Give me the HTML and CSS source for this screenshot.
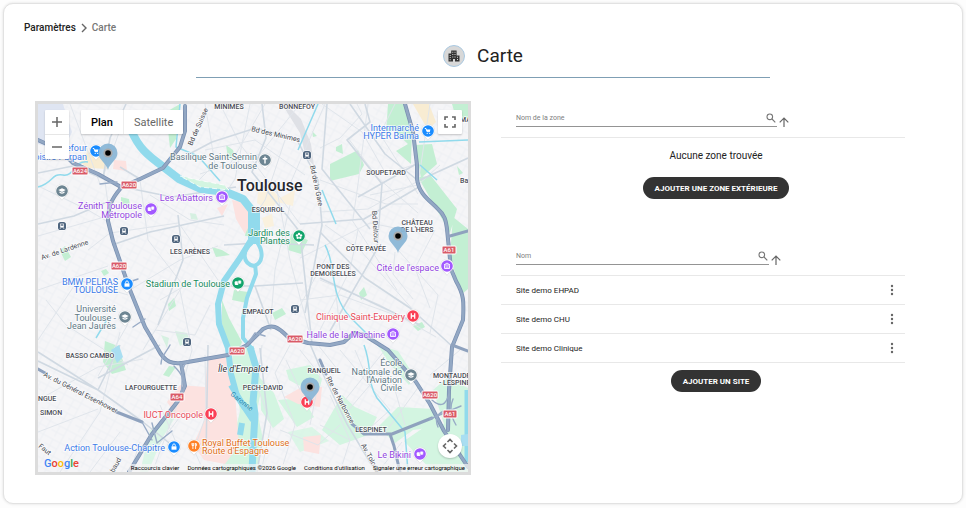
FILE: index.html
```html
<!DOCTYPE html>
<html lang="fr">
<head>
<meta charset="utf-8">
<meta name="viewport" content="width=device-width, initial-scale=1">
<title>Carte</title>
<link rel="stylesheet" href="styles.css">
</head>
<body>
<main class="card">
  <nav class="breadcrumb" aria-label="Fil d'Ariane">
    <a href="#">Paramètres</a>
    <svg width="6" height="10" viewBox="0 0 6 10" fill="none" stroke="#666" stroke-width="1.4"><path d="M1 1l4 4-4 4"/></svg>
    <span>Carte</span>
  </nav>

  <header class="title">
    <span class="title-icon">
      <svg width="12" height="12" viewBox="0 0 12 12"><path fill="#333" d="M3.2.5h5.4v5h2.9v6H7v-2.600H5v2.600H.5v-8h2.700z"/><path fill="#d8d8d8" d="M4.300 1.700h1v1h-1zM6.500 1.700h1v1h-1zM4.300 4h1v1h-1zM6.500 4h1v1h-1zM4.300 6.400h1v1h-1zM6.500 6.400h1v1h-1zM1.700 4.900h1v1h-1zM1.700 7h1v1h-1zM1.700 9.200h1v1h-1zM9 6.800h1v1H9zM9 9h1v1H9z"/></svg>
    </span>
    <h1>Carte</h1>
  </header>

  <div class="columns">
    <section class="map" aria-label="Carte de Toulouse">
      <svg class="map-canvas" viewBox="38 104 430 368" preserveAspectRatio="xMidYMid slice">
        <defs>
          <g id="pin"><path d="M-7 0a7 7 0 1 1 14 0C7 4 2.500 6 0 9.500C-2.500 6-7 4-7 0z" fill="#bbb" opacity=".5"/><path d="M-6.700 0a6.700 6.700 0 1 1 13.400 0C6.700 3.500 2.500 5.500 0 9C-2.500 5.500-6.700 3.500-6.700 0z" fill="#fff"/><circle r="5.800" fill="currentColor"/></g>
          <g id="cart" fill="none" stroke="#fff"><path d="M-3.200-2.500h1.200l1 3.200h3"/><path fill="#fff" d="M-1.500-1.500h4L1.800.400h-2.800z" stroke="none"/><path d="M-1.300 2.500h1M1.200 2.500h1"/></g>
          <g id="museum" fill="none" stroke="#fff" stroke-width=".9"><path d="M-3-1L0-3l3 2zM-2.500-.500v3h5v-3M-.900 2V.200M.900 2V.200"/></g>
          <g id="masks"><rect x="-3.300" y="-1.800" width="3.800" height="3.800" rx="1" fill="#fff"/><rect x="0" y="-2.800" width="3.300" height="3.800" rx="1" fill="#fff" stroke="currentColor" stroke-width=".5"/></g>
          <g id="school"><path fill="#fff" d="M-3.700-1L0-2.800 3.700-1 0 1z"/><path fill="none" stroke="#fff" stroke-width="1.200" d="M-2.400.700C-1.500 2.500 1.500 2.500 2.400.700"/></g>
          <g id="bag"><path fill="#fff" d="M-2.500-.700h5V2.700h-5z"/><path fill="none" stroke="#fff" stroke-width=".9" d="M-1.300-.600v-1.200a1.300 1.300 0 0 1 2.600 0v1.200"/></g>
          <path id="hospital" d="M-1.700-2.700v5.400M1.700-2.700v5.400M-1.700 0h3.400" stroke="#fff" stroke-width="1.300"/>
          <g id="flower" fill="#fff"><circle cy="-2.100" r="1.200"/><circle cx="2" cy="-.600" r="1.200"/><circle cx="1.300" cy="1.800" r="1.200"/><circle cx="-1.300" cy="1.800" r="1.200"/><circle cx="-2" cy="-.600" r="1.200"/></g>
          <g id="station"><rect x="-4.500" y="-4.500" width="9" height="9" rx="3" fill="#fff"/><rect x="-4" y="-4" width="8" height="8" rx="2.600" fill="#4f657e"/><path fill="#fff" d="M-1.800-2.400h3.600V1.500h-3.600z"/><path fill="#4f657e" d="M-1.200-1.700h2.400v1.400h-2.400z"/><path stroke="#fff" stroke-width=".7" d="M-1 1.500l-1 1.300M1 1.500l1 1.300"/></g>
          <g id="marker"><path fill="#8ab6d6" fill-opacity=".95" d="M0 17C-1.500 10-9.500 7-9.500 0a9.500 9.500 0 0 1 19 0C9.500 7 1.500 10 0 17z"/><circle r="4.600" fill="#a8a8a8"/><circle r="2.800" fill="#000"/></g>
          <pattern id="streets" width="19" height="15" patternUnits="userSpaceOnUse" patternTransform="rotate(28)"><path d="M0 3h19M6 3v12M14 0v15M0 10h14" fill="none" stroke="#ebeef2" stroke-width=".7"/></pattern>
        </defs>

        <rect x="38" y="104" width="430" height="368" fill="#f5f5f7"/>
        <rect x="38" y="104" width="430" height="368" fill="url(#streets)"/>
        <path fill="#dfe5f2" d="M38 104h25l9 28-9 19-25-7z"/>
        <path fill="#f8ecd2" d="M89 150l14 1 5 18-20-1-8-6zM413 104h16l7 18-8 8z"/>
        <path fill="#faf1de" d="M258 192l12-4 10 10 15-8-2 16-16-4-8 9-12-8zM262 218l10-4 2 12-9 2z"/>
        <path fill="#dfe1e6" d="M286 104l15 15 10 25 3 22-8-9-6-24-18-29z"/>

        <g fill="#c3efd3">
          <path d="M388 104h17l7 25-1 35-15-13 12-7-15-14-7 3zM330 164l28-14 6 15-5 9-29 7zM336 147l6-3 1 10-7-3z"/>
          <path d="M415 145l17-1 5 20-16 14zM418 177l13-1 26 33-7 24zM453 217l15 12v60l-7 6-11-40z"/>
          <path d="M226 145l7 5 3 11-8-3zM212 247l10 3 8 5-14 2zM291 234l17 6-7 14-13-4zM247 222h7v14h-9zM234 290l14 2-1 11-15-3z"/>
          <path d="M222 300l7 18 13 24-2 5h-11l-7-23zM272 313l10-5 4 6-11 6zM312 131l5 5-4 1zM60 251l5-5 6 11-6 4zM101 271l5-2 3 4-5 3zM168 304l6-6 2 8-7 5zM166 112l14-8-4 35-6 9z"/>
          <path d="M121 197l8 2 1 7-9-2zM105 341l13 5 8 24-14 4-9-12zM176 367l-7 10-6-2 6-9zM359 293l5-6 3 8-6 5zM413 326l9-4 3 5-7 4zM452 104h16v14h-12zM457 166l6 7-4 2z"/>
          <path d="M175 331l12 2 3 8-10 5zM161 335l8 3-2 10zM190 213l6 1 2 6-7-1z" opacity=".6"/>
        </g>
        <g fill="#d3f5e1">
          <path d="M233 346h20l9 40-5 25 6 28-7 33h-37l12-23 9-38-8-45z"/>
          <path d="M260 378l14 15 10 26-11 9-12-18zM286 370l24-5 12 14-3 12-21-6-9-5zM278 400l25-2 11 19-17 10zM322 430l20-35 13 12 22 10-9 18-28 10zM378 427l20-20 36 2 7 17-28 4-18 13zM378 345l20 6 17 26-6 8-21-23zM433 390l14-12 21 10v84h-35l-29-31 22-15 18-2z"/>
          <path d="M150 430l15-10 13-27 6 10-21 34-15 35h-8zM288 432l24-5 17 14-29 11z" opacity=".75"/>
        </g>
        <g fill="#fce2e0">
          <path d="M208 356l24 1 4 49 3 39-14 19-21-4-11-15 12-26-12-6-17 2-9-13 13-17 25 2z"/>
          <path d="M232 200l15 3 5 17-7 14-9-15zM300 388l22-1-2 20-22-3-14-7zM303 437l18-2-2 19-15-3zM114 160l12 1 1 10-14-2zM228 204l-6 12-5-8z"/>
        </g>

        <g fill="none" stroke="#e0e5eb" stroke-width="1">
          <path d="M38 186l50 24 22 13M38 236l70-20M38 290l70-24M38 340l40-60 50 15M70 104l30 80M88 250l22-17 68-10M46 300l20 25 62 40M108 204l-4-30 20-55M140 180l8 60 35 45-40 65"/>
          <path d="M150 195l40 25 34 5M180 290l12 60-15 55-23 63M180 225l38 55M160 300l35-20M155 330l40 5 15-30M130 290l50-30 38-14M38 432l60-23M60 472l40-60 20-80M90 472l30-40M38 400l60-33 45-8M98 376l30-52"/>
          <path d="M205 104l10 60-20 20M220 104l20 40 60 80M250 104l-15 75-10 15M265 104l-35 60M300 104l-40 50-60 20M285 140l-20 60-10 15M325 104l-35 80M305 175l-50-35-50 10M275 180l15 80 23 86M290 205l-15 65-5 60"/>
          <path d="M322 104l40 28 24 42M357 104l5 10-22 24-20 10M348 138l30 40 40 35M320 180l66 24h32M320 212l48-3 52-29M395 104l-15 30 38 60M385 174l35-11M368 104l-10 80-5 35M430 104l-12 80M440 165l-22 20-48 10"/>
          <path d="M325 225l35 25 55 62M320 280l60 25 56 32M300 258l70-35 50 10M352 220l45 70M395 252l-2 22 20 25M398 250l40 45-8 38M320 330l30-60 8-40M300 300l40-5 55 20M340 330l-5-45M330 250l-35 65M435 230l-20 38 15 40"/>
          <path d="M300 350l20 25-10 50M318 345l20 25M340 350l50 60-20 18M355 350l15 35-30 35M385 350l-40 50M395 390l10 35M330 395l20 45M320 425l30 15-10 32M378 472l24-30M420 385l-35 48M460 350l-30 25"/>
          <path d="M262 345l-5 40 14 40-10 47M290 345l-15 28 20 52-12 40M280 430l38 15 22-20M286 360l14 30M205 355l1 60-12 35 10 22M160 405l15 35M130 472l10-30M185 410l-30 40"/>
        </g>
        <g fill="none" stroke="#d0d9e2" stroke-width="1.600" stroke-linejoin="round">
          <path d="M38 173l35-7 50 21 49 10 64-10M103 178l7-40 16-34M120 167l20 12M38 224l36-8 40-17M112 245l38-13 74-16M178 215l5 45-25 65M224 245l35-2 55 2M218 286h37l48-3M255 286l16 44"/>
          <path d="M178 160l34-18 44-14 41 12 21 40 4 45-17 88M262 104l4 34-14 34 48 60 12 112M327 104l-5 65 48 60"/>
          <path d="M365 104l5 18-23 18 35 44-5 65-47 82M420 180l48-22M418 163l-60 34M320 232l45 46 45 30 43 39M350 104l35 50 31 25M300 224l64-5 55-32M320 278l100 47"/>
          <path d="M120 345l-22 45-60-29M98 378l62-33M38 352l60 38 45 32 30 24M208 345l-2 110M260 348l7 65-10 59M310 344l12 28 25 52 30 50"/>
        </g>

        <g fill="none" stroke="#91daec" stroke-linejoin="round">
          <path stroke-width="8" d="M128 122c8 23 17 31 29 40l22 17 22 10 25 3 17 7 11 14 1 14"/>
          <path stroke-width="12" d="M254 210v34"/>
          <path stroke-width="6" d="M251 240l-11 18-16 23-6 23 1 20 9 24 3 26 6 22 8 12"/>
          <path stroke-width="4" d="M252 243c-11 8-9 21 2 23 9-3 10-14 3-24M255 264l1 10-9 24-4 20v20l10 12"/>
          <path stroke-width="7" d="M250 347l6 20-3 35 2 12-2 35-1 23"/>
          <path stroke-width="6" d="M231 385l12 20 10 15M242 423l-2 12"/>
          <path stroke-width="1.500" d="M180 104l-4 43 22 9 22 25M38 187c16-4 13-14 25-12s10-15 25-13M318 104l-20 46M325 245c12 20 3 48 25 72l30 30M364 345c9 24 2 35 13 53l28 34 3 40M322 190l14 34M419 142l49-2M420 165l17 15M96 338l12-20"/>
          <path stroke-width="5" d="M467 390v72"/>
        </g>
        <path fill="#d3f5e1" stroke="#fff" stroke-width=".8" stroke-dasharray="5 3" d="M180 176l18 4 26 5 5 5-29-3z"/>
        <path fill="#a9def1" d="M111 350l8-5 4 12-6 6zM461 435l7-1v12h-7z"/>

        <g fill="none" stroke-linecap="round" stroke-linejoin="round">
          <g stroke="#7b91b2" stroke-width="4">
            <path d="M38 140l22 10 13 13 25 11 23 13 19-8 23-11 17-21 5-16V106"/>
            <path d="M121 188c-10 11-13 20-13 33l5 20 17 49 15 37 13 22c7 14 15 15 24 14l46-8 19-10 16-16c9-5 14-3 25 8l20 6 22 2 14-3 10-9 10 2 24 15 28 32 14 22 14 27 24 36"/>
            <path d="M405 104l8 28 4 33v14c2 15 12 21 20 29 9 8 9 14 10 21l4 40 5 12c8 14 8 20 7 39l-11 27-3 43-1 40"/>
            <path d="M181 363l4 23-7 15-26 33-23 38"/>
          </g>
          <g stroke="#93a8c4" stroke-width="2.500">
            <path d="M38 140l22 10 13 13 25 11 23 13 19-8 23-11 17-21 5-16V106"/>
            <path d="M121 188c-10 11-13 20-13 33l5 20 17 49 15 37 13 22c7 14 15 15 24 14l46-8 19-10 16-16c9-5 14-3 25 8l20 6 22 2 14-3 10-9 10 2 24 15 28 32 14 22 14 27 24 36"/>
            <path d="M405 104l8 28 4 33v14c2 15 12 21 20 29 9 8 9 14 10 21l4 40 5 12c8 14 8 20 7 39l-11 27-3 43-1 40"/>
            <path d="M181 363l4 23-7 15-26 33-23 38"/>
          </g>
          <g stroke="#8fa2be" stroke-width="3"><path d="M38 369l7 4M114 411l28 11M320 360l6 14M352 424l12 10h28l40-16M390 434l4 12 6 26M450 236l18-5M452 345l16 6"/></g>
          <g stroke="#98abc6" stroke-width="1.400"><path d="M170 345c-4 8-9 11-9 19M174 366c8 8 14 16 7 34M188 361c-10 8-3 20-8 38M432 400c9 8 14 5 17-6M438 427c-5-12 3-16 11-17M456 425c-6-10-6-19-3-26M430 419l31-13M100 184l17-2M126 283l12-4M133 327l12-8M247 345l8-12 10 3M142 422l10 18M152 423l5 20 15-12"/></g>
        </g>

        <g>
          <g transform="translate(80 171)"><rect class="shield" x="-8" y="-4" width="16" height="8" rx="1"/><text class="shield-text" y="2">A624</text></g>
          <g transform="translate(129 185)"><rect class="shield" x="-8" y="-4" width="16" height="8" rx="1"/><text class="shield-text" y="2">A620</text></g>
          <g transform="translate(119 266)"><rect class="shield" x="-8" y="-4" width="16" height="8" rx="1"/><text class="shield-text" y="2">A620</text></g>
          <g transform="translate(237 351)"><rect class="shield" x="-8" y="-4" width="16" height="8" rx="1"/><text class="shield-text" y="2">A620</text></g>
          <g transform="translate(295 339)"><rect class="shield" x="-8" y="-4" width="16" height="8" rx="1"/><text class="shield-text" y="2">A620</text></g>
          <g transform="translate(430 395)"><rect class="shield" x="-8" y="-4" width="16" height="8" rx="1"/><text class="shield-text" y="2">A620</text></g>
          <g transform="translate(449 250)"><rect class="shield" x="-7" y="-4" width="14" height="8" rx="1"/><text class="shield-text" y="2">A61</text></g>
          <g transform="translate(450 414)"><rect class="shield" x="-7" y="-4" width="14" height="8" rx="1"/><text class="shield-text" y="2">A61</text></g>
          <g transform="translate(177 397)"><rect class="shield" x="-7" y="-4" width="14" height="8" rx="1"/><text class="shield-text" y="2">A64</text></g>
        </g>

        <g class="road">
          <text transform="translate(192 146) rotate(-66)">Bd de Suisse</text>
          <text transform="translate(251 131) rotate(13)">Bd des Minimes</text>
          <text transform="translate(310 166) rotate(78)">Bd de la Gare</text>
          <text transform="translate(372 211) rotate(86)">Bd Deltour</text>
          <text transform="translate(42 260) rotate(-19)">Av. de Lardenne</text>
          <text transform="translate(43 376) rotate(27)">Av. du Général Eisenhower</text>
          <text transform="translate(326 378) rotate(62)">Rte de Narbonne</text>
          <text transform="translate(361 445) rotate(62)">Av. Tolosane</text>
          <text transform="translate(38 447) rotate(38)">Faut</text>
          <text transform="translate(114 473) rotate(-62)">baud</text>
          <text class="water" transform="translate(230 395) rotate(38)">Garonne</text>
        </g>

        <g class="district">
          <text x="229" y="109">MINIMES</text>
          <text x="297" y="109">BONNEFOY</text>
          <text x="386" y="175">SOUPETARD</text>
          <text x="268" y="212">ESQUIROL</text>
          <text x="190" y="254">LES ARÈNES</text>
          <text x="366" y="251">CÔTE PAVÉE</text>
          <text x="417" y="225">CHÂTEAU</text><text x="417" y="232">DE L'HERS</text>
          <text x="333" y="269">PONT DES</text><text x="333" y="276">DEMOISELLES</text>
          <text x="258" y="314">EMPALOT</text>
          <text x="90" y="358">BASSO CAMBO</text>
          <text x="151" y="390">LAFOURGUETTE</text>
          <text x="263" y="390">PECH-DAVID</text>
          <text x="324" y="373">RANGUEIL</text>
          <text x="371" y="432">LESPINET</text>
          <text class="from-left" x="38" y="401">NGUE</text>
          <text class="from-left" x="40" y="415">SIMON</text>
          <text class="from-left" x="433" y="378">MONTAUDRAN</text>
          <text class="from-left" x="439" y="385">- LESPINET</text>
          <text class="from-left" x="460" y="122">MA</text>
          <text class="from-left" x="460" y="183">Balma</text>
        </g>
        <text class="city" x="237" y="191">Toulouse</text>
        <text class="island" x="218" y="372">Île d'Empalot</text>

        <use href="#station" x="307" y="155"/><use href="#station" x="62" y="226"/><use href="#station" x="124" y="231"/><use href="#station" x="176" y="239"/><use href="#station" x="295" y="309"/><use href="#station" x="187" y="342"/>

        <g class="poi blue">
          <text x="87" y="151">Carrefour</text><text x="87" y="160">loisirs Purpan</text>
          <g transform="translate(96 151)"><use href="#pin"/><use href="#cart"/></g>
          <text x="419" y="131">Intermarché</text><text x="419" y="139">HYPER Balma</text>
          <g transform="translate(428 131)"><use href="#pin"/><use href="#cart"/></g>
          <text x="118" y="285">BMW PELRAS</text><text x="118" y="293">TOULOUSE</text>
          <g transform="translate(127 284)"><use href="#pin"/><use href="#bag"/></g>
          <text x="165" y="451">Action Toulouse-Chapitre</text>
          <g transform="translate(174 447)"><use href="#pin"/><use href="#bag"/></g>
        </g>
        <g class="poi purple">
          <text x="142" y="209">Zénith Toulouse</text><text x="142" y="218">Métropole</text>
          <g transform="translate(151 209)"><use href="#pin"/><use href="#masks"/></g>
          <text x="213" y="201">Les Abattoirs</text>
          <g transform="translate(222 197)"><use href="#pin"/><use href="#museum"/></g>
          <text x="439" y="271">Cité de l'espace</text>
          <g transform="translate(447 266)"><use href="#pin"/><use href="#museum"/></g>
          <text x="385" y="338">Halle de la Machine</text>
          <g transform="translate(393 334)"><use href="#pin"/><use href="#museum"/></g>
          <text x="411" y="458">Le Bikini</text>
          <g transform="translate(420 454)"><use href="#pin"/><use href="#masks"/></g>
        </g>
        <g class="poi green">
          <text x="290" y="236">Jardin des</text><text x="290" y="244">Plantes</text>
          <g transform="translate(299 236)"><use href="#pin"/><use href="#flower"/></g>
          <text x="230" y="287">Stadium de Toulouse</text>
          <g transform="translate(238 283)"><use href="#pin"/><use href="#masks"/></g>
        </g>
        <g class="poi slate">
          <text x="257" y="160">Basilique Saint-Sernin</text><text x="257" y="169">de Toulouse</text>
          <g transform="translate(265 160)"><use href="#pin"/><path d="M0-3.500v7M-2.300-1.200h4.600" stroke="#fff" stroke-width="1.400"/></g>
          <g transform="translate(62 191)"><use href="#pin"/><use href="#school"/></g>
          <text x="116" y="312">Université</text><text x="116" y="321">Toulouse -</text><text x="116" y="329">Jean Jaurès</text>
          <g transform="translate(125 317)"><use href="#pin"/><use href="#school"/></g>
          <text x="402" y="366">École</text><text x="402" y="375">Nationale de</text><text x="402" y="383">l'Aviation</text><text x="402" y="391">Civile</text>
          <g transform="translate(411 375)"><use href="#pin"/><use href="#school"/></g>
        </g>
        <g class="poi red">
          <text x="405" y="320">Clinique Saint-Exupéry</text>
          <g transform="translate(413 316)"><use href="#pin"/><use href="#hospital"/></g>
          <text x="203" y="418">IUCT Oncopole</text>
          <g transform="translate(211 414)"><use href="#pin"/><use href="#hospital"/></g>
          <g transform="translate(307 402)"><use href="#pin"/><use href="#hospital"/></g>
        </g>
        <g class="poi orange">
          <text class="from-left" x="202" y="446">Royal Buffet Toulouse</text><text class="from-left" x="202" y="454">Route d'Espagne</text>
          <g transform="translate(194 446)"><use href="#pin"/><path d="M-2-3v2.500h1.800V-3M-1.100-3v6M1.600 3v-6c1.500 1.500 1.200 3 0 3" fill="none" stroke="#fff" stroke-width=".9"/></g>
        </g>
        <use href="#marker" x="108" y="153"/><use href="#marker" x="398" y="236"/><use href="#marker" x="310" y="387"/>
      </svg>

      <div class="control zoom">
        <button type="button" aria-label="Zoom avant"><svg width="12" height="12" viewBox="0 0 12 12"><path d="M6 1v10M1 6h10" stroke="#666" stroke-width="1.500"/></svg></button>
        <button type="button" aria-label="Zoom arrière"><svg width="12" height="12" viewBox="0 0 12 12"><path d="M1 6h10" stroke="#666" stroke-width="1.500"/></svg></button>
      </div>
      <div class="control types">
        <button type="button" class="active">Plan</button>
        <button type="button">Satellite</button>
      </div>
      <button type="button" class="control fullscreen" aria-label="Plein écran"><svg width="12" height="12" viewBox="0 0 12 12"><path d="M1 4V1h3M8 1h3v3M11 8v3H8M4 11H1V8" fill="none" stroke="#666" stroke-width="1.600"/></svg></button>
      <button type="button" class="control pan" aria-label="Déplacer la carte"><svg width="16" height="16" viewBox="0 0 16 16"><path d="M5.500 4L8 1.500 10.500 4M5.500 12L8 14.500 10.500 12M4 5.500L1.500 8 4 10.500M12 5.500L14.500 8 12 10.500" fill="none" stroke="#666" stroke-width="1.600"/></svg></button>
      <div class="google" aria-label="Google"><span class="g-blue">G</span><span class="g-red">o</span><span class="g-yellow">o</span><span class="g-blue">g</span><span class="g-green">l</span><span class="g-red">e</span></div>
      <div class="attribution">
        <button type="button">Raccourcis clavier</button>
        <span>Données cartographiques ©2026 Google</span>
        <a href="#">Conditions d'utilisation</a>
        <a href="#">Signaler une erreur cartographique</a>
      </div>
    </section>

    <div class="lists">
      <section class="panel">
        <div class="filter">
          <label class="field field-zone">
            <input type="text" placeholder="Nom de la zone" aria-label="Nom de la zone">
            <svg width="10" height="10" viewBox="0 0 10 10" fill="none" stroke="#777" stroke-width="1.100"><circle cx="3.800" cy="3.800" r="2.800"/><path d="M6 6l3.300 3.300"/></svg>
          </label>
          <button type="button" class="sort" aria-label="Trier par nom de zone"><svg width="10" height="10" viewBox="0 0 10 10" fill="none" stroke="#666" stroke-width="1.200"><path d="M5 10V1M.700 5.300L5 1l4.300 4.300"/></svg></button>
        </div>
        <p class="empty">Aucune zone trouvée</p>
        <button type="button" class="action">AJOUTER UNE ZONE EXTÉRIEURE</button>
      </section>

      <section class="panel">
        <div class="filter">
          <label class="field field-site">
            <input type="text" placeholder="Nom" aria-label="Nom">
            <svg width="10" height="10" viewBox="0 0 10 10" fill="none" stroke="#777" stroke-width="1.100"><circle cx="3.800" cy="3.800" r="2.800"/><path d="M6 6l3.300 3.300"/></svg>
          </label>
          <button type="button" class="sort" aria-label="Trier par nom"><svg width="10" height="10" viewBox="0 0 10 10" fill="none" stroke="#666" stroke-width="1.200"><path d="M5 10V1M.700 5.300L5 1l4.300 4.300"/></svg></button>
        </div>
        <table class="sites">
          <tbody>
            <tr><td>Site demo EHPAD</td><td class="menu"><button type="button" aria-label="Actions Site demo EHPAD"><svg width="4" height="12" viewBox="0 0 4 12" fill="#666"><circle cx="2" cy="2" r="1.200"/><circle cx="2" cy="6" r="1.200"/><circle cx="2" cy="10" r="1.200"/></svg></button></td></tr>
            <tr><td>Site demo CHU</td><td class="menu"><button type="button" aria-label="Actions Site demo CHU"><svg width="4" height="12" viewBox="0 0 4 12" fill="#666"><circle cx="2" cy="2" r="1.200"/><circle cx="2" cy="6" r="1.200"/><circle cx="2" cy="10" r="1.200"/></svg></button></td></tr>
            <tr><td>Site demo Clinique</td><td class="menu"><button type="button" aria-label="Actions Site demo Clinique"><svg width="4" height="12" viewBox="0 0 4 12" fill="#666"><circle cx="2" cy="2" r="1.200"/><circle cx="2" cy="6" r="1.200"/><circle cx="2" cy="10" r="1.200"/></svg></button></td></tr>
          </tbody>
        </table>
        <button type="button" class="action">AJOUTER UN SITE</button>
      </section>
    </div>
  </div>
</main>
</body>
</html>
```
FILE: styles.css
```css
* { box-sizing: border-box; }

body {
  margin: 0;
  padding: 3px 3px 4px;
  background: #fdfdfd;
  color: #222;
  font-family: Roboto, "Liberation Sans", sans-serif;
  font-size: 8px;
}

button {
  display: flex;
  align-items: center;
  justify-content: center;
  margin: 0;
  padding: 0;
  border: 0;
  background: none;
  color: inherit;
  font: inherit;
  cursor: pointer;
}

a { color: inherit; text-decoration: none; }
svg { display: block; }

.card {
  min-height: calc(100vh - 7px);
  padding-top: 18px;
  border: 1px solid #e2e2e2;
  border-radius: 10px;
  background: #fff;
  box-shadow: 0 0 3px #ddd;
}

.breadcrumb {
  display: flex;
  align-items: center;
  gap: 5px;
  padding-left: 20px;
  color: #777;
  font-size: 10px;
  font-weight: 500;
  line-height: 12px;
}
.breadcrumb a { color: #222; }

.title {
  display: flex;
  align-items: center;
  justify-content: center;
  gap: 12px;
  width: 60%;
  margin: 11px auto 23px;
  padding-bottom: 10px;
  border-bottom: 1px solid #7f9fb4;
}
.title-icon {
  display: grid;
  place-items: center;
  width: 22px;
  height: 22px;
  border: 1px solid #a9c9e2;
  border-radius: 50%;
  background: #d8d8d8;
}
.title h1 {
  margin: 0;
  font-size: 19px;
  font-weight: 400;
  line-height: 22px;
}

.columns {
  display: grid;
  grid-template-columns: 436fr 404fr;
  gap: 30px;
  align-items: start;
  padding: 0 57px 24px 31px;
}

/* Map */
.map {
  position: relative;
  aspect-ratio: 436 / 374;
  border: 3px solid #dcdcdc;
  overflow: hidden;
}
.map-canvas { width: 100%; height: 100%; }

.map-canvas text {
  paint-order: stroke;
  stroke: #fff;
  stroke-width: 1.5px;
  stroke-opacity: 0.8;
}
.poi text { font-size: 9px; text-anchor: end; fill: currentColor; }
.blue { color: #1a8cff; }
.blue text { fill: #3c7be8; }
.purple { color: #a259ff; }
.purple text { fill: #9345e0; }
.green { color: #12a46b; }
.green text { fill: #178a5c; }
.slate { color: #6d8592; }
.slate text { fill: #617985; }
.red { color: #fa4056; }
.red text { fill: #e84a5a; }
.orange { color: #ff8126; }
.orange text { fill: #e07020; }

.district text { font-size: 7px; font-weight: 500; text-anchor: middle; fill: #4a4d55; }
.road text { font-size: 7px; fill: #454850; }
.map-canvas .from-left { text-anchor: start; }
.map-canvas .water { fill: #2a86ad; stroke: none; }
.city { font-size: 16px; font-weight: 500; fill: #26282e; }
.island { font-size: 9px; font-style: italic; fill: #30333a; }
.shield { fill: #d95b68; stroke: #fff; }
.map-canvas .shield-text { font-size: 6px; font-weight: 500; fill: #fff; stroke: none; text-anchor: middle; }

.control {
  position: absolute;
  background: #fff;
  border-radius: 1px;
  box-shadow: 0 1px 2px #0003;
}
.zoom { top: 6px; left: 7px; width: 24px; }
.zoom button { width: 100%; height: 24px; }
.zoom button + button { height: 25px; border-top: 1px solid #e6e6e6; }
.types { top: 6px; left: 43px; display: flex; height: 24px; color: #666; font-size: 11px; }
.types button { padding: 0 10px; }
.types .active { color: #000; font-weight: 500; border-right: 1px solid #eee; }
.fullscreen { top: 6px; right: 6px; width: 24px; height: 24px; }
.pan { right: 6px; bottom: 14px; width: 24px; height: 24px; border-radius: 50%; }

.google {
  position: absolute;
  left: 6px;
  bottom: 1px;
  font-size: 11px;
  font-weight: 500;
  line-height: 14px;
}
.g-blue { color: #4285f4; }
.g-red { color: #ea4335; }
.g-yellow { color: #fbbc04; }
.g-green { color: #34a853; }

.attribution {
  position: absolute;
  right: 0;
  bottom: 0;
  display: flex;
  gap: 8px;
  padding: 0 3px;
  background: #f5f5f5b3;
  color: #000;
  font-size: 6px;
  line-height: 8px;
  white-space: nowrap;
}

/* Lists */
.lists { display: grid; gap: 40px; }
.panel { display: flex; flex-direction: column; align-items: center; }

.filter {
  display: flex;
  align-items: flex-end;
  gap: 2px;
  align-self: stretch;
  padding: 8px 0 10px 15px;
  border-bottom: 1px solid #e8e8e8;
}
.field {
  display: flex;
  align-items: center;
  height: 18px;
  padding-right: 1px;
  border-bottom: 1px solid #949494;
}
.field-zone { width: 67%; }
.field-site { width: 65%; }
.field input {
  flex: 1;
  min-width: 0;
  padding: 0;
  border: 0;
  outline: 0;
  background: none;
  color: #222;
  font: inherit;
  font-size: 7px;
}
.field input::placeholder { color: #808080; opacity: 1; }

.empty {
  margin: 12px 0 15px 26px;
  font-size: 10px;
  line-height: 12px;
}
.action {
  height: 22px;
  margin-left: 26px;
  padding: 0 12px;
  border-radius: 11px;
  background: #333;
  color: #fff;
  font-weight: 700;
}
.sites { width: 100%; margin-bottom: 7px; border-spacing: 0; }
.sites td { height: 29px; padding: 0 0 0 15px; border-bottom: 1px solid #e8e8e8; }
.sites .menu { width: 22px; padding: 0; }
.menu button { width: 18px; height: 20px; }
```
